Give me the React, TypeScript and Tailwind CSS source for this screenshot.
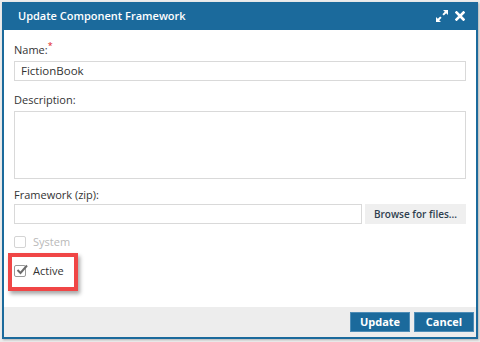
import React from "react";

const font = { fontFamily: '"Open Sans", "Liberation Sans", sans-serif' };

const ExpandIcon = () => (
  <svg width="12" height="12" viewBox="0 0 12 12" fill="white">
    <path d="M7 0h5v5l-1.8-1.8-2.4 2.4-1.4-1.4 2.4-2.4z" />
    <path d="M5 12H0V7l1.8 1.8 2.4-2.4 1.4 1.4-2.4 2.4z" />
  </svg>
);

const CloseIcon = () => (
  <svg width="10" height="10" viewBox="0 0 10 10">
    <path d="M1.5 1.5l7 7M8.5 1.5l-7 7" stroke="white" strokeWidth="2.6" strokeLinecap="square" />
  </svg>
);

const Checkbox = ({ checked, disabled }: { checked?: boolean; disabled?: boolean }) => (
  <span
    className={`relative w-[12px] h-[12px] border rounded-[2px] bg-white ${
      disabled ? "border-[#d4d4d4]" : "border-[#9a9a9a]"
    }`}
  >
    {checked && (
      <svg width="12" height="12" viewBox="0 0 12 12" className="absolute left-[1px] -top-[2px]">
        <path d="M1.5 6l3 3L11 1.5" stroke="#6b6b6b" strokeWidth="2" fill="none" />
      </svg>
    )}
  </span>
);

export default function App() {
  return (
    <div className="w-[480px] h-[342px] bg-[#ececec] pt-[2px] pl-[2px] relative" style={font}>
      <div className="w-[476px] h-[337px] border-2 border-t-0 border-[#1b6a9c] bg-white flex flex-col shadow-[1px_1px_2px_rgba(0,0,0,0.25)]">
        {/* Title bar */}
        <div className="h-[28px] -mx-[2px] bg-[#1b6a9c] flex items-center pl-[16px] pr-[13px]">
          <span className="text-white font-semibold text-[11px]">Update Component Framework</span>
          <div className="ml-auto flex items-center gap-[7px]">
            <ExpandIcon />
            <CloseIcon />
          </div>
        </div>

        {/* Body */}
        <div className="flex-1 px-[10px] pt-[12px] text-[11px] text-[#333]">
          <div className="leading-[15px]">
            Name:<span className="text-[#e02020] align-top text-[9px] leading-[8px]">*</span>
          </div>
          <div className="mt-[4px] h-[20px] border border-[#d9d9d9] flex items-center px-[6px] text-[11.5px] text-[#333]">
            FictionBook
          </div>

          <div className="mt-[11px] leading-[15px]">Description:</div>
          <div className="mt-[4px] h-[68px] border border-[#d9d9d9]" />

          <div className="mt-[8px] leading-[15px]">Framework (zip):</div>
          <div className="mt-[2px] flex gap-[3px]">
            <div className="w-[348px] h-[20px] border border-[#d9d9d9]" />
            <div className="flex-1 h-[20px] bg-[#efefef] flex items-center justify-center font-semibold text-[10px] text-[#2e3e4e]">
              Browse for files...
            </div>
          </div>

          <div className="mt-[11px] flex items-center gap-[7px] text-[#b9b9b9] h-[14px]">
            <Checkbox disabled />
            System
          </div>
          <div className="mt-[15px] flex items-center gap-[7px] text-[#333] h-[14px]">
            <Checkbox checked />
            Active
          </div>
        </div>

        {/* Footer */}
        <div className="h-[30px] bg-[#ededed] flex items-center justify-end gap-[4px] pr-[2px]">
          <button className="w-[60px] h-[20px] bg-[#1b6a9c] border border-[#4d8cb6] text-white font-bold text-[11px]">
            Update
          </button>
          <button className="w-[60px] h-[20px] bg-[#1b6a9c] border border-[#4d8cb6] text-white font-bold text-[11px]">
            Cancel
          </button>
        </div>
      </div>

      {/* highlight annotation */}
      <div className="absolute left-[8px] top-[253px] w-[70px] h-[38px] border-[4px] border-[#f04646] shadow-[2px_3px_4px_rgba(0,0,0,0.35)]" />
    </div>
  );
}
